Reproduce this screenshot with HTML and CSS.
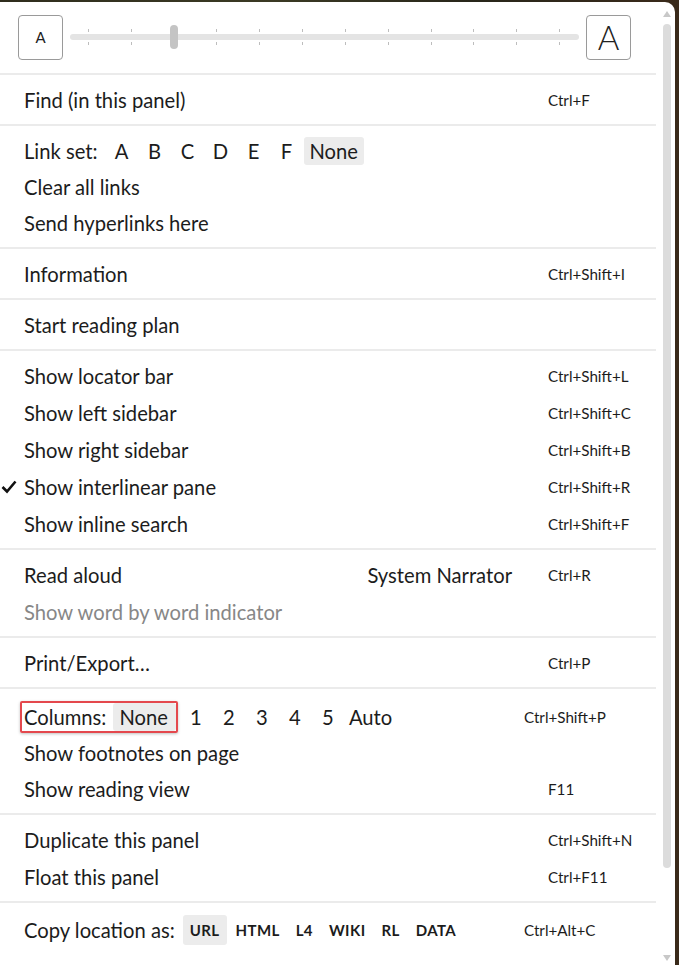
FILE: index.html
```html
<!DOCTYPE html>
<html>
<head>
<meta charset="utf-8">
<link rel="stylesheet" href="styles.css">
</head>
<body>
<div class="panel">
  <div class="menu">
    <div class="section size-row">
      <div class="size-box small">A</div>
      <div class="slider">
        <span class="tick"></span><span class="tick"></span><span class="tick thumb"></span><span class="tick"></span><span class="tick"></span><span class="tick"></span><span class="tick"></span><span class="tick"></span><span class="tick"></span><span class="tick"></span><span class="tick"></span><span class="tick"></span>
      </div>
      <div class="size-box large">A</div>
    </div>

    <div class="section">
      <div class="row"><span class="check"></span><span class="label">Find (in this panel)</span><span class="key">Ctrl+F</span></div>
    </div>

    <div class="section">
      <div class="row row-link">
        <span class="check"></span>
        <span class="label options">
          <span class="opt-label">Link set:</span>
          <span class="opt">A</span><span class="opt">B</span><span class="opt">C</span><span class="opt">D</span><span class="opt">E</span><span class="opt">F</span><span class="opt chip">None</span>
        </span>
        <span class="key"></span>
      </div>
      <div class="row row-short"><span class="check"></span><span class="label">Clear all links</span><span class="key"></span></div>
      <div class="row"><span class="check"></span><span class="label">Send hyperlinks here</span><span class="key"></span></div>
    </div>

    <div class="section">
      <div class="row"><span class="check"></span><span class="label">Information</span><span class="key">Ctrl+Shift+I</span></div>
    </div>

    <div class="section">
      <div class="row"><span class="check"></span><span class="label">Start reading plan</span><span class="key"></span></div>
    </div>

    <div class="section">
      <div class="row"><span class="check"></span><span class="label">Show locator bar</span><span class="key">Ctrl+Shift+L</span></div>
      <div class="row"><span class="check"></span><span class="label">Show left sidebar</span><span class="key">Ctrl+Shift+C</span></div>
      <div class="row"><span class="check"></span><span class="label">Show right sidebar</span><span class="key">Ctrl+Shift+B</span></div>
      <div class="row"><span class="check"><svg width="16" height="14" viewBox="0 0 16 14"><path d="M1.5 7 L6 11.5 L14.5 1.5" fill="none" stroke="#111" stroke-width="2.6"/></svg></span><span class="label">Show interlinear pane</span><span class="key">Ctrl+Shift+R</span></div>
      <div class="row"><span class="check"></span><span class="label">Show inline search</span><span class="key">Ctrl+Shift+F</span></div>
    </div>

    <div class="section">
      <div class="row row-extra"><span class="check"></span><span class="label">Read aloud</span><span class="extra">System Narrator</span><span class="key">Ctrl+R</span></div>
      <div class="row"><span class="check"></span><span class="label disabled">Show word by word indicator</span><span class="key"></span></div>
    </div>

    <div class="section">
      <div class="row"><span class="check"></span><span class="label">Print/Export…</span><span class="key">Ctrl+P</span></div>
    </div>

    <div class="section">
      <div class="row row-wide row-cols">
        <span class="check"></span>
        <span class="label options">
          <span class="highlight"><span class="opt-label">Columns:</span><span class="opt chip">None</span></span>
          <span class="opt">1</span><span class="opt">2</span><span class="opt">3</span><span class="opt">4</span><span class="opt">5</span><span class="opt">Auto</span>
        </span>
        <span class="key">Ctrl+Shift+P</span>
      </div>
      <div class="row row-foot"><span class="check"></span><span class="label">Show footnotes on page</span><span class="key"></span></div>
      <div class="row"><span class="check"></span><span class="label">Show reading view</span><span class="key">F11</span></div>
    </div>

    <div class="section">
      <div class="row"><span class="check"></span><span class="label">Duplicate this panel</span><span class="key">Ctrl+Shift+N</span></div>
      <div class="row"><span class="check"></span><span class="label">Float this panel</span><span class="key">Ctrl+F11</span></div>
    </div>

    <div class="section">
      <div class="row row-wide row-copy">
        <span class="check"></span>
        <span class="label options">
          <span class="opt-label copy-label">Copy location as:</span>
          <span class="fmt chip">URL</span><span class="fmt">HTML</span><span class="fmt">L4</span><span class="fmt">WIKI</span><span class="fmt">RL</span><span class="fmt">DATA</span>
        </span>
        <span class="key">Ctrl+Alt+C</span>
      </div>
    </div>
  </div>

  <div class="scroll">
    <span class="arrow up"></span>
    <span class="thumb-bar"></span>
    <span class="spacer"></span>
    <span class="arrow down"></span>
  </div>
</div>
</body>
</html>
```

FILE: styles.css
```css
html, body {
  margin: 0;
  padding: 0;
}

body {
  width: 679px;
  height: 965px;
  overflow: hidden;
  background: linear-gradient(90deg, #2f2d1d 0%, #3b3a24 40%, #28261a 70%, #3a2a1a 100%);
  font-family: Lato, "Noto Sans", sans-serif;
  color: #1c1c1c;
}

.panel {
  margin-top: 2px;
  width: 675px;
  height: 963px;
  background: #fff;
  border-top-right-radius: 10px;
  display: flex;
}

.menu {
  width: 656px;
  flex: none;
}

.section {
  padding: 6px 0;
  border-top: 2px solid #ebebeb;
}

.section:first-child {
  border-top: none;
}

/* size row */
.size-row {
  display: flex;
  align-items: center;
  padding: 12px 25px 13px 18px;
  gap: 7px;
}

.size-box {
  width: 43px;
  height: 43px;
  border: 1.5px solid #9a9a9a;
  border-radius: 4px;
  display: flex;
  align-items: center;
  justify-content: center;
  color: #222;
  flex: none;
  font-weight: 300;
}

.size-box.small {
  font-size: 15px;
  font-weight: 400;
}

.size-box.large {
  font-size: 33px;
}

.slider {
  flex: 1;
  height: 46px;
  position: relative;
  display: flex;
  justify-content: space-between;
  align-items: center;
  padding: 0 19px 0 18px;
}

.slider::before {
  content: "";
  position: absolute;
  left: 0;
  right: 0;
  top: 20px;
  height: 6px;
  border-radius: 3px;
  background: #e4e4e4;
}

.tick {
  position: relative;
  width: 1px;
  height: 16px;
  background: linear-gradient(#bdbdbd 0, #bdbdbd 3px, transparent 3px, transparent 13px, #bdbdbd 13px, #bdbdbd 16px);
}

.tick.thumb::after {
  content: "";
  position: absolute;
  left: -3.5px;
  top: -4px;
  width: 8px;
  height: 24px;
  border-radius: 4px;
  background: #c4c4c4;
}

/* rows */
.row {
  box-sizing: border-box;
  display: grid;
  grid-template-columns: 24px 1fr 108px;
  align-items: center;
  height: 37px;
  font-size: 20.2px;
}

.row-extra {
  grid-template-columns: 24px 1fr auto 108px;
}

.row-wide {
  grid-template-columns: 24px 1fr 132px;
}

.row-link {
  height: 38px;
}

.row-short {
  height: 34px;
}

.row-foot {
  height: 35px;
}

.row-cols {
  height: 40px;
  padding-top: 4px;
}

.row-copy {
  height: 40px;
  padding-top: 2px;
}

.check {
  display: flex;
  align-items: center;
  padding-left: 1px;
}

.label {
  white-space: nowrap;
}

.disabled {
  color: #878787;
}

.extra {
  margin-right: 36px;
}

.key {
  font-size: 15.2px;
  white-space: nowrap;
}

.options {
  display: flex;
  align-items: center;
}

.opt-label {
  margin-right: 12px;
}

.opt {
  min-width: 24px;
  text-align: center;
  margin-right: 9px;
  line-height: 28px;
}

.chip {
  background: #ececec;
  border-radius: 3px;
  padding: 0 6px;
}

.opt + .chip {
  margin-left: -4px;
}

.highlight {
  box-sizing: border-box;
  height: 32px;
  display: inline-flex;
  align-items: center;
  margin-left: -4px;
  padding-left: 2px;
  border: 2px solid #e4484d;
  border-radius: 2px;
  box-shadow: 0 1px 3px rgba(0, 0, 0, 0.25);
  margin-right: 6px;
}

.highlight .opt-label {
  margin-right: 7px;
}

.highlight .chip {
  margin-right: 0;
  padding: 0 8px 0 6px;
}

.copy-label {
  margin-right: 8px;
}

.fmt {
  font-size: 15px;
  font-weight: 700;
  letter-spacing: 0.4px;
  padding: 0 7px;
  margin-right: 2px;
  line-height: 30px;
}

/* scrollbar */
.scroll {
  width: 19px;
  flex: none;
  display: flex;
  flex-direction: column;
  align-items: center;
  padding: 9px 0 4px 3px;
  box-sizing: border-box;
}

.arrow {
  width: 0;
  height: 0;
  border-left: 4.5px solid transparent;
  border-right: 4.5px solid transparent;
  flex: none;
}

.arrow.up {
  border-bottom: 6px solid #c8c8c8;
}

.arrow.down {
  border-top: 6px solid #c8c8c8;
}

.thumb-bar {
  margin-top: 7px;
  width: 8px;
  height: 844px;
  border-radius: 4px;
  background: #dcdcdc;
  flex: none;
}

.spacer {
  flex: 1;
}
```
